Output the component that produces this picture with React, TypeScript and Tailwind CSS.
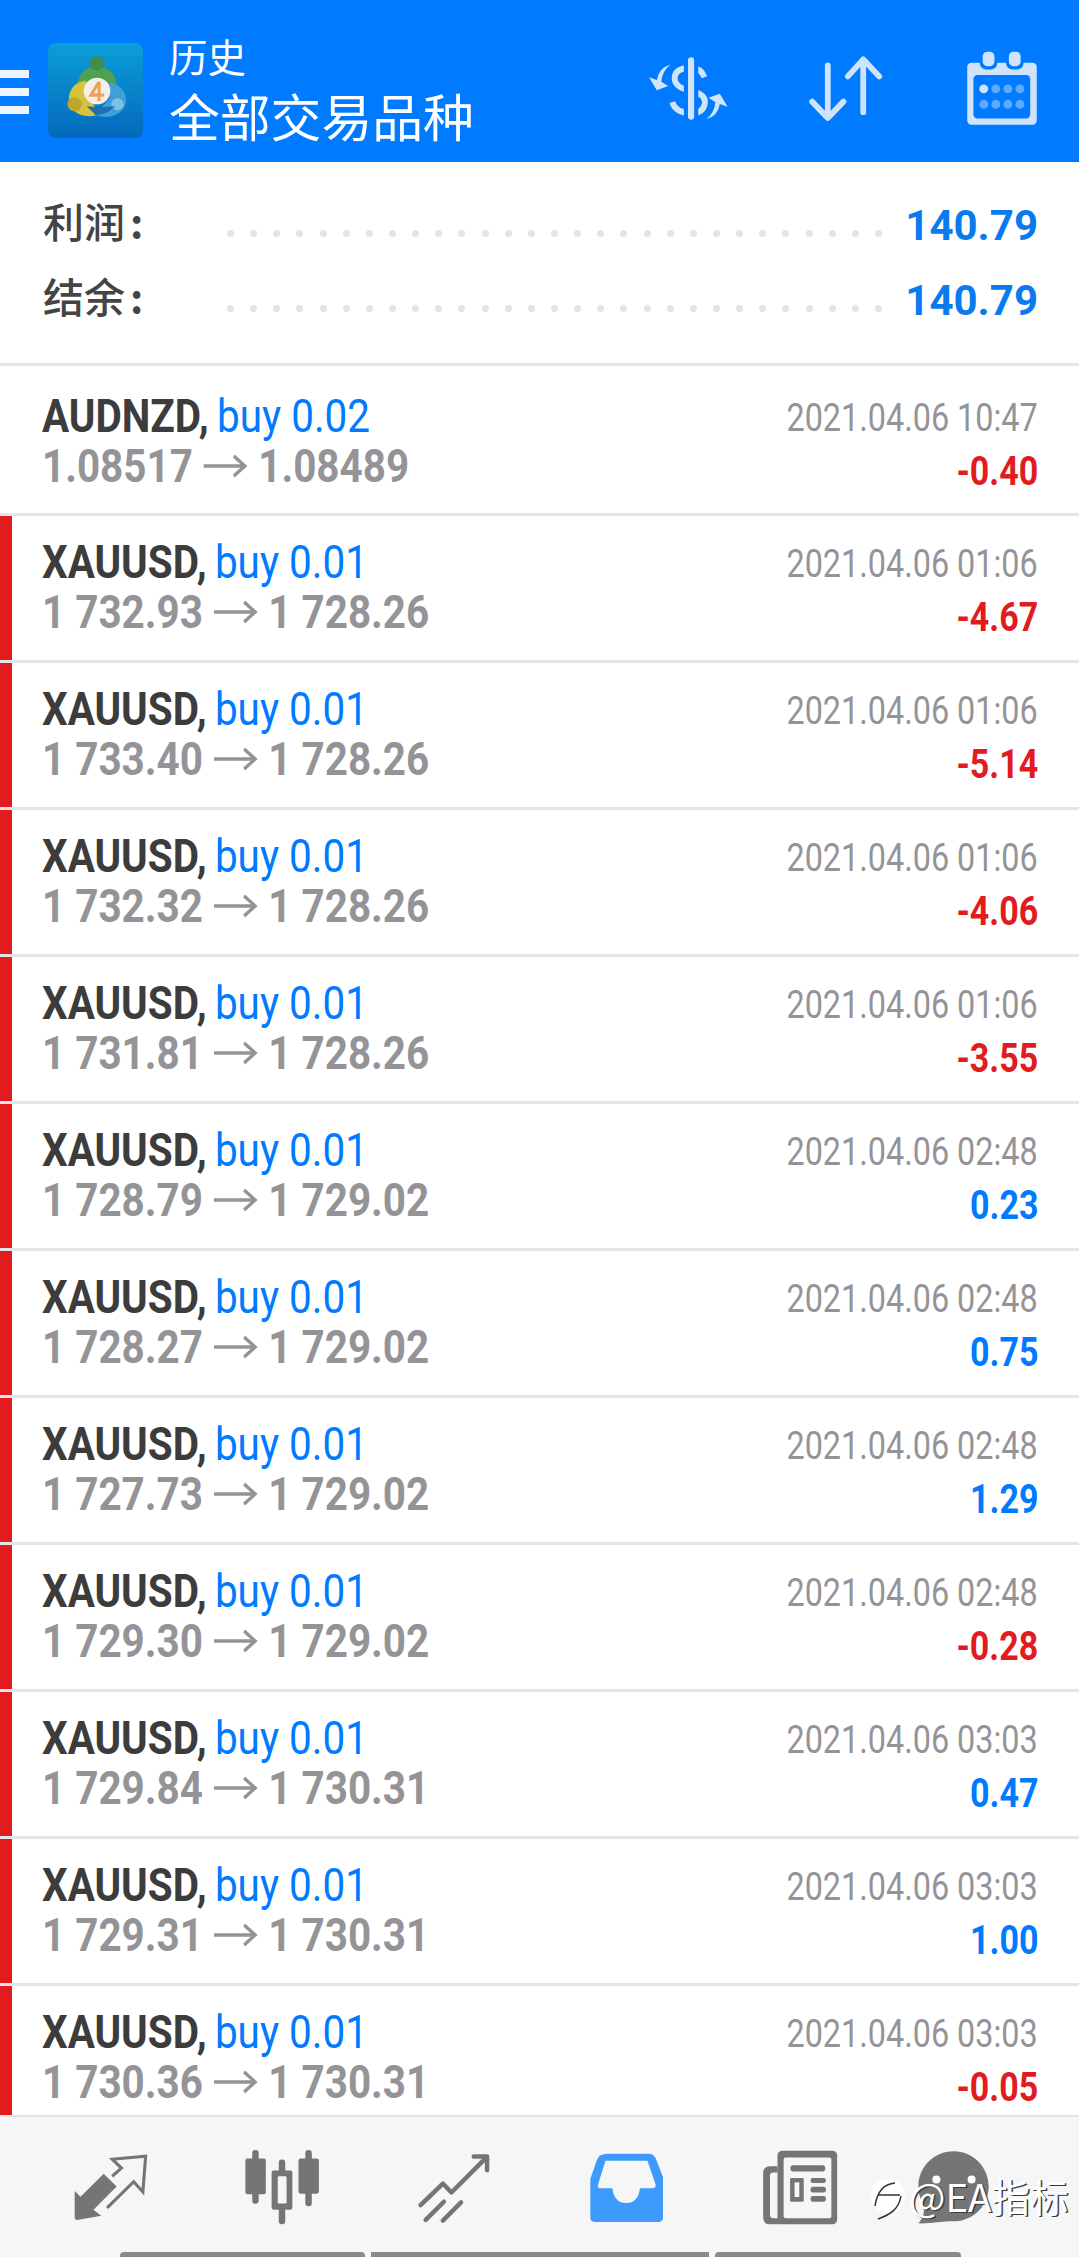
const rows = [
  { sym: "AUDNZD", lot: "buy 0.02", from: "1.08517", to: "1.08489", time: "2021.04.06 10:47", profit: "-0.40", bar: false },
  { sym: "XAUUSD", lot: "buy 0.01", from: "1 732.93", to: "1 728.26", time: "2021.04.06 01:06", profit: "-4.67", bar: true },
  { sym: "XAUUSD", lot: "buy 0.01", from: "1 733.40", to: "1 728.26", time: "2021.04.06 01:06", profit: "-5.14", bar: true },
  { sym: "XAUUSD", lot: "buy 0.01", from: "1 732.32", to: "1 728.26", time: "2021.04.06 01:06", profit: "-4.06", bar: true },
  { sym: "XAUUSD", lot: "buy 0.01", from: "1 731.81", to: "1 728.26", time: "2021.04.06 01:06", profit: "-3.55", bar: true },
  { sym: "XAUUSD", lot: "buy 0.01", from: "1 728.79", to: "1 729.02", time: "2021.04.06 02:48", profit: "0.23", bar: true },
  { sym: "XAUUSD", lot: "buy 0.01", from: "1 728.27", to: "1 729.02", time: "2021.04.06 02:48", profit: "0.75", bar: true },
  { sym: "XAUUSD", lot: "buy 0.01", from: "1 727.73", to: "1 729.02", time: "2021.04.06 02:48", profit: "1.29", bar: true },
  { sym: "XAUUSD", lot: "buy 0.01", from: "1 729.30", to: "1 729.02", time: "2021.04.06 02:48", profit: "-0.28", bar: true },
  { sym: "XAUUSD", lot: "buy 0.01", from: "1 729.84", to: "1 730.31", time: "2021.04.06 03:03", profit: "0.47", bar: true },
  { sym: "XAUUSD", lot: "buy 0.01", from: "1 729.31", to: "1 730.31", time: "2021.04.06 03:03", profit: "1.00", bar: true },
  { sym: "XAUUSD", lot: "buy 0.01", from: "1 730.36", to: "1 730.31", time: "2021.04.06 03:03", profit: "-0.05", bar: true },
];

const dots = Array.from({ length: 29 }, (_, i) => i);

function Logo() {
  return (
    <svg width="95" height="95" viewBox="0 0 93 93" className="rounded-lg shrink-0 mt-[18px]">
      <defs>
        <linearGradient id="lg" x1="0" y1="0" x2="0" y2="1">
          <stop offset="0" stopColor="#0a9fd8" />
          <stop offset="1" stopColor="#0468bb" />
        </linearGradient>
      </defs>
      <rect width="93" height="93" fill="url(#lg)" />
      <path d="M29 46 C27 30 38 23 48 23 C58 23 69 30 67 46 L48 52 Z" fill="#4fa04f" />
      <circle cx="48" cy="20" r="7" fill="#3f8f4a" />
      <path d="M37 37 C25 38 19 48 21 59 C24 71 40 74 50 70 L40 52 Z" fill="#d6c23c" />
      <circle cx="26" cy="60" r="7" fill="#bda62c" />
      <path d="M61 38 C73 42 78 50 76 60 C72 72 56 75 46 70 L60 55 Z" fill="#3f9fd8" />
      <circle cx="68" cy="60" r="6" fill="#7cc2e4" />
      <path d="M38 62 L47 71 L58 68 L66 62 L50 63 Z" fill="#1d6fb0" />
      <circle cx="48" cy="47" r="13" fill="#f3f0ea" />
      <path d="M50 38 L42 51 H55 M50 38 V57" fill="none" stroke="#efa254" strokeWidth="3" />
    </svg>
  );
}

function DollarIcon() {
  return (
    <svg width="81" height="65" viewBox="320 170 235 190" fill="#cfe4fb">
      <path d="M484 232 Q475 205 445 205 Q397 205 397 235 Q397 262 445 272 Q490 282 485 310 Q480 337 445 337 Q400 337 390 305" fill="none" stroke="#cfe4fb" strokeWidth="17" />
      <rect x="424" y="170" width="42" height="190" fill="#007aff" />
      <rect x="436" y="174" width="18" height="182" rx="9" />
      <path d="M385 195 Q350 205 345 240 L322 232 L345 270 L378 258 L358 245 Q360 215 385 195Z" />
      <path d="M489 355 Q524 345 529 310 L552 318 L529 280 L496 292 L516 305 Q514 335 489 355Z" />
    </svg>
  );
}

function SortIcon() {
  return (
    <svg width="75" height="67" viewBox="780 170 220 195" fill="none" stroke="#cfe4fb" strokeWidth="17" strokeLinecap="round" strokeLinejoin="round">
      <path d="M838 200 V350 M792 306 L838 354 L884 306" />
      <path d="M942 337 V185 M897 232 L942 182 L989 232" />
    </svg>
  );
}

function CalendarIcon() {
  return (
    <svg width="70" height="74" viewBox="1245 158 202 215">
      <rect x="1245" y="192" width="202" height="180" rx="12" fill="#cfe4fb" />
      <rect x="1263" y="228" width="165" height="126" rx="12" fill="#007aff" />
      <rect x="1282" y="152" width="50" height="60" rx="18" fill="#007aff" />
      <rect x="1358" y="152" width="50" height="60" rx="18" fill="#007aff" />
      <rect x="1290" y="160" width="34" height="42" rx="13" fill="#cfe4fb" />
      <rect x="1366" y="160" width="34" height="42" rx="13" fill="#cfe4fb" />
      <g fill="#cfe4fb">
        <circle cx="1293" cy="268" r="13" />
        <g opacity=".45">
          <circle cx="1328" cy="268" r="13" />
          <circle cx="1363" cy="268" r="13" />
          <circle cx="1398" cy="268" r="13" />
          <circle cx="1293" cy="313" r="13" />
          <circle cx="1328" cy="313" r="13" />
          <circle cx="1363" cy="313" r="13" />
          <circle cx="1398" cy="313" r="13" />
        </g>
      </g>
    </svg>
  );
}

function TradeIcon() {
  return (
    <svg width="75" height="69" viewBox="210 195 220 200" fill="#757575">
      <path d="M215 305 L232 322 L300 255 L338 292 L270 360 L293 378 L222 390 Q215 390 215 382 Z" />
      <path d="M325 262 L352 238 L325 212 L423 203 L415 308 L388 278 L310 355" fill="none" stroke="#757575" strokeWidth="9" />
    </svg>
  );
}

function CandleIcon() {
  return (
    <svg width="80" height="79" viewBox="700 180 235 230" fill="#757575">
      <rect x="710" y="210" width="60" height="105" rx="6" />
      <rect x="730" y="185" width="19" height="158" rx="9" />
      <rect x="787" y="245" width="61" height="115" rx="6" />
      <rect x="808" y="213" width="19" height="190" rx="9" />
      <rect x="805" y="262" width="26" height="80" rx="4" fill="#f6f6f6" />
      <rect x="866" y="210" width="60" height="103" rx="6" />
      <rect x="886" y="185" width="19" height="165" rx="9" />
    </svg>
  );
}

function LinesIcon() {
  return (
    <svg width="74" height="72" viewBox="1210 185 215 210" fill="none" stroke="#757575" strokeWidth="13" strokeLinecap="round" strokeLinejoin="round">
      <path d="M1220 340 L1285 277 L1310 303 L1410 203" />
      <path d="M1375 198 H1414 V238" />
      <path d="M1235 383 L1288 330 M1285 385 L1338 332" />
    </svg>
  );
}

function InboxIcon() {
  return (
    <svg width="74" height="69" viewBox="145 190 215 200">
      <path d="M195 192 H315 Q330 192 337 207 L357 260 V378 Q357 390 345 390 H158 Q146 390 146 378 V265 L165 210 Q172 192 195 192Z" fill="#3d9bff" />
      <path d="M190 212 H312 L336 283 Q336 292 328 292 H290 Q285 335 250 335 Q215 335 210 292 H175 Q166 292 168 283 Z" fill="#f6f6f6" />
    </svg>
  );
}

function NewsIcon() {
  return (
    <svg width="77" height="75" viewBox="645 180 225 220" fill="#757575">
      <path d="M690 228 H668 Q648 228 648 248 V378 Q648 398 668 398 H700 V380 H678 Q668 380 668 370 V255 Q668 246 678 246 H690Z" />
      <rect x="690" y="182" width="175" height="216" rx="14" />
      <rect x="708" y="202" width="140" height="178" rx="6" fill="#f6f6f6" />
      <rect x="728" y="225" width="102" height="18" rx="8" />
      <rect x="727" y="262" width="40" height="70" rx="4" />
      <rect x="740" y="275" width="14" height="43" fill="#f6f6f6" />
      <rect x="787" y="262" width="45" height="15" rx="7" />
      <rect x="787" y="288" width="45" height="17" rx="7" />
      <rect x="787" y="315" width="45" height="17" rx="7" />
    </svg>
  );
}

function ChatIcon() {
  return (
    <svg width="72" height="73" viewBox="1108 182 215 218" fill="#757575">
      <path d="M1217 183 C1275 183 1322 230 1322 288 C1322 346 1275 392 1217 392 C1180 392 1140 400 1112 398 C1125 385 1132 365 1128 345 C1118 328 1112 308 1112 288 C1112 230 1159 183 1217 183Z" />
      <circle cx="1166" cy="267" r="12" fill="#fff" />
      <circle cx="1271" cy="267" r="12" fill="#fff" />
    </svg>
  );
}

function Watermark() {
  return (
    <div className="absolute left-[870px] top-[2176px] flex items-start gap-[3px] text-white text-[38.5px] leading-none [font-family:'Noto_Sans_CJK_SC',sans-serif] [text-shadow:1.5px_1px_0.5px_#3a3a3a]">
      <svg width="36" height="42" viewBox="0 0 36 42" fill="none" className="mt-[4px]">
        <circle cx="18" cy="16" r="17" fill="#fff" opacity=".92" />
        <path d="M5 26 C7 12 14 4 25 3 M9 15 H30 M31 16 C29 28 22 34 8 39" stroke="#333" strokeWidth="1.5" />
      </svg>
      <span>@EA指标</span>
    </div>
  );
}

function Row({ r }: { r: (typeof rows)[number] }) {
  const loss = r.profit.startsWith("-");
  return (
    <div className={`flex shrink-0 border-b-[3px] border-[#e5e5e5] ${r.bar ? "h-[147px]" : "h-[150px]"}`}>
      <div className={`w-3 shrink-0 ${r.bar ? "bg-[#e21b1f]" : "bg-white"}`} />
      <div className={`flex-1 flex justify-between pl-[30px] pr-[41px] [font-family:Roboto,sans-serif] ${r.bar ? "pt-[20px]" : "pt-[24px]"}`}>
        <div className="flex flex-col pt-[1px]">
          <div className="h-[50px] text-[47px] leading-[50px] whitespace-nowrap origin-left scale-x-[.86]">
            <span className="font-bold text-[#3c3c3c]">{r.sym},</span>{" "}
            <span className="-ml-[2px] text-[#007aff]">{r.lot}</span>
          </div>
          <div className="h-[50px] flex items-center text-[47px] leading-[50px] font-bold text-[#949498] whitespace-nowrap origin-left scale-x-[.86]">
            <span>{r.from}</span>
            <svg width="52" height="24" viewBox="0 0 52 24" fill="none" stroke="#949498" strokeWidth="3.5" className="mx-[12px] shrink-0">
              <path d="M1 12 H48 M36 2 L49 12 L36 22" />
            </svg>
            <span>{r.to}</span>
          </div>
        </div>
        <div className="flex flex-col items-end pt-[3px]">
          <div className="h-[54px] text-[39px] leading-[50px] text-[#949498] whitespace-nowrap origin-right scale-x-[.83]">{r.time}</div>
          <div className={`h-[50px] text-[40px] leading-[50px] font-bold whitespace-nowrap origin-right scale-x-[.85] ${loss ? "text-[#e21b1f]" : "text-[#007aff]"}`}>{r.profit}</div>
        </div>
      </div>
    </div>
  );
}

function Summary({ label, value }: { label: string; value: string }) {
  return (
    <div className="h-[75px] flex items-center">
      <div className="w-[184px] mb-[8px] text-[41px] font-medium text-[#444] leading-none [font-family:'Noto_Sans_CJK_SC',sans-serif]">
        {label}
        <span className="ml-[5px] font-bold">:</span>
      </div>
      <div className="w-[655px] flex justify-between pt-[18px]">
        {dots.map((d) => (
          <span key={d} className="w-[7px] h-[7px] rounded-full bg-[#e4e4e4]" />
        ))}
      </div>
      <div className="flex-1 mt-[2px] text-right text-[42px] font-bold text-[#0a7aef] whitespace-nowrap [font-family:Roboto,sans-serif]">{value}</div>
    </div>
  );
}

export default function App() {
  return (
    <div className="relative w-[1079px] h-[2257px] overflow-hidden bg-white flex flex-col">
      {/* header */}
      <div className="h-[162px] shrink-0 bg-[#007aff] flex items-center">
        <div className="w-[29px] flex flex-col gap-[10px] mr-[19px] mt-[22px]">
          <div className="h-2 bg-[#eef4fd]" />
          <div className="h-2 bg-[#eef4fd]" />
          <div className="h-2 bg-[#eef4fd]" />
        </div>
        <Logo />
        <div className="ml-[26px] mt-[24px] text-white [font-family:'Noto_Sans_CJK_SC',sans-serif]">
          <div className="text-[38.5px] leading-[50px] -mt-[6px] -translate-y-[3px]">历史</div>
          <div className="text-[50.8px] leading-[64px]">全部交易品种</div>
        </div>
        <div className="ml-auto mt-[14px] flex items-center pr-[42px]">
          <DollarIcon />
          <div className="ml-[79px]"><SortIcon /></div>
          <div className="ml-[84px]"><CalendarIcon /></div>
        </div>
      </div>

      {/* totals */}
      <div className="h-[204px] shrink-0 border-b-[3px] border-[#e5e5e5] pl-[43px] pr-[41px] pt-[25px]">
        <Summary label="利润" value="140.79" />
        <Summary label="结余" value="140.79" />
      </div>

      {/* deals */}
      <div className="flex-1 min-h-0 overflow-hidden">
        {rows.map((r, i) => (
          <Row key={i} r={r} />
        ))}
      </div>

      {/* bottom tabs */}
      <div className="h-[142px] shrink-0 bg-[#f6f6f6] border-t-2 border-[#e3e3e3] flex flex-col">
        <div className="h-[133px] pt-[8px] flex items-center">
          <div className="ml-[73px]"><TradeIcon /></div>
          <div className="ml-[94px]"><CandleIcon /></div>
          <div className="ml-[95px]"><LinesIcon /></div>
          <div className="ml-[99px]"><InboxIcon /></div>
          <div className="ml-[98px]"><NewsIcon /></div>
          <div className="ml-[78px]"><ChatIcon /></div>
        </div>
        <div className="h-[5px] mt-auto flex gap-[6px] pl-[120px]">
          <div className="w-[245px] bg-[#8a8a8a] rounded-t-sm" />
          <div className="w-[338px] bg-[#8a8a8a]" />
          <div className="w-[246px] bg-[#8a8a8a] rounded-t-sm" />
        </div>
      </div>

      <Watermark />
    </div>
  );
}
